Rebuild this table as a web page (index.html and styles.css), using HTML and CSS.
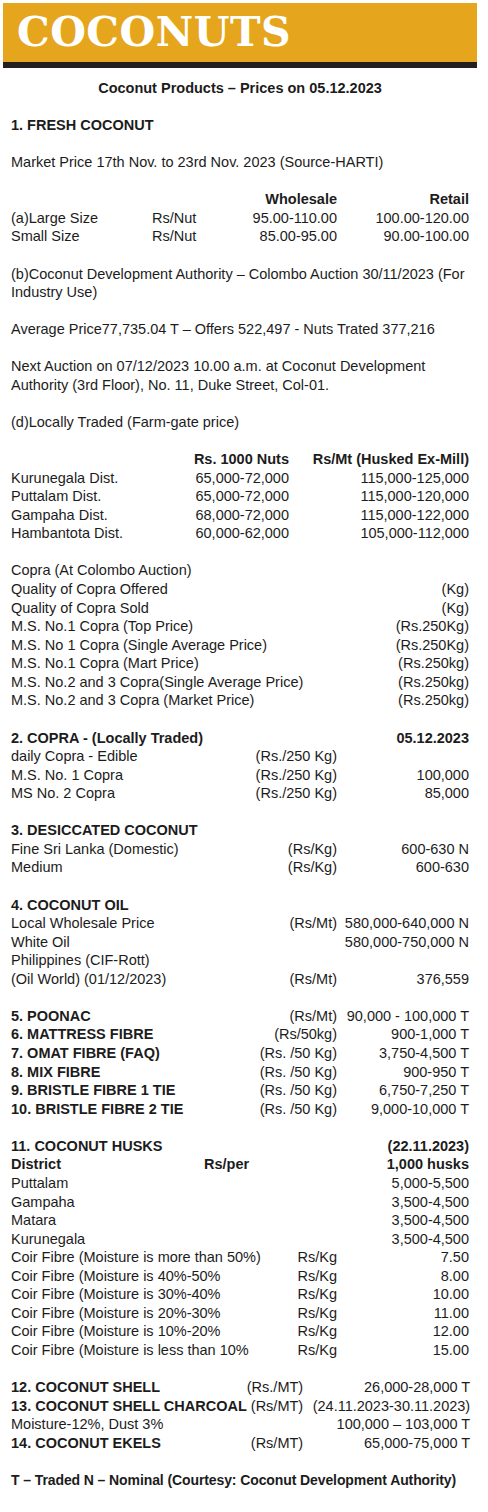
FILE: index.html
```html
<!DOCTYPE html>
<html lang="en">
<head>
<meta charset="utf-8">
<title>Coconuts</title>
<link rel="stylesheet" href="styles.css">
</head>
<body>
<div class="page">
  <header class="banner">
    <h1 class="banner-title">COCONUTS</h1>
  </header>

  <main class="content">
    <p class="title">Coconut Products – Prices on 05.12.2023</p>

    <p class="block bold">1. FRESH COCONUT</p>

    <p class="block">Market Price 17th Nov. to 23rd Nov. 2023 (Source-HARTI)</p>

    <div class="block t-fresh">
      <span></span><span></span><span class="r bold">Wholesale</span><span class="r bold">Retail</span>
      <span>(a)Large Size</span><span>Rs/Nut</span><span class="r">95.00-110.00</span><span class="r">100.00-120.00</span>
      <span>Small Size</span><span>Rs/Nut</span><span class="r">85.00-95.00</span><span class="r">90.00-100.00</span>
    </div>

    <p class="block wide">(b)Coconut Development Authority – Colombo Auction 30/11/2023 (For Industry Use)</p>

    <p class="block">Average Price77,735.04 T – Offers 522,497 - Nuts Trated 377,216</p>

    <p class="block">Next Auction on 07/12/2023 10.00 a.m. at Coconut Development Authority (3rd Floor), No. 11, Duke Street, Col-01.</p>

    <p class="block">(d)Locally Traded (Farm-gate price)</p>

    <div class="block t-district">
      <span></span><span class="r bold">Rs. 1000 Nuts</span><span class="r bold">Rs/Mt (Husked Ex-Mill)</span>
      <span>Kurunegala Dist.</span><span class="r">65,000-72,000</span><span class="r">115,000-125,000</span>
      <span>Puttalam Dist.</span><span class="r">65,000-72,000</span><span class="r">115,000-120,000</span>
      <span>Gampaha Dist.</span><span class="r">68,000-72,000</span><span class="r">115,000-122,000</span>
      <span>Hambantota Dist.</span><span class="r">60,000-62,000</span><span class="r">105,000-112,000</span>
    </div>

    <div class="block t-two">
      <span>Copra (At Colombo Auction)</span><span></span>
      <span>Quality of Copra Offered</span><span class="r">(Kg)</span>
      <span>Quality of Copra Sold</span><span class="r">(Kg)</span>
      <span>M.S. No.1 Copra (Top Price)</span><span class="r">(Rs.250Kg)</span>
      <span>M.S. No 1 Copra (Single Average Price)</span><span class="r">(Rs.250Kg)</span>
      <span>M.S. No.1 Copra (Mart Price)</span><span class="r">(Rs.250kg)</span>
      <span>M.S. No.2 and 3 Copra(Single Average Price)</span><span class="r">(Rs.250kg)</span>
      <span>M.S. No.2 and 3 Copra (Market Price)</span><span class="r">(Rs.250kg)</span>
    </div>

    <div class="block t-three">
      <span class="bold">2. COPRA - (Locally Traded)</span><span></span><span class="r bold">05.12.2023</span>
      <span>daily Copra - Edible</span><span class="r">(Rs./250 Kg)</span><span></span>
      <span>M.S. No. 1 Copra</span><span class="r">(Rs./250 Kg)</span><span class="r">100,000</span>
      <span>MS No. 2 Copra</span><span class="r">(Rs./250 Kg)</span><span class="r">85,000</span>
    </div>

    <div class="block t-three">
      <span class="bold span3">3. DESICCATED COCONUT</span>
      <span>Fine Sri Lanka (Domestic)</span><span class="r">(Rs/Kg)</span><span class="r">600-630 N</span>
      <span>Medium</span><span class="r">(Rs/Kg)</span><span class="r">600-630</span>
    </div>

    <div class="block t-three">
      <span class="bold span3">4. COCONUT OIL</span>
      <span>Local Wholesale Price</span><span class="r">(Rs/Mt)</span><span class="r">580,000-640,000 N</span>
      <span>White Oil</span><span></span><span class="r">580,000-750,000 N</span>
      <span class="span3">Philippines (CIF-Rott)</span>
      <span>(Oil World) (01/12/2023)</span><span class="r">(Rs/Mt)</span><span class="r">376,559</span>
    </div>

    <div class="block t-three">
      <span class="bold">5. POONAC</span><span class="r">(Rs/Mt)</span><span class="r">90,000 - 100,000 T</span>
      <span class="bold">6. MATTRESS FIBRE</span><span class="r">(Rs/50kg)</span><span class="r">900-1,000 T</span>
      <span class="bold">7. OMAT FIBRE (FAQ)</span><span class="r">(Rs. /50 Kg)</span><span class="r">3,750-4,500 T</span>
      <span class="bold">8. MIX FIBRE</span><span class="r">(Rs. /50 Kg)</span><span class="r">900-950 T</span>
      <span class="bold">9. BRISTLE FIBRE 1 TIE</span><span class="r">(Rs. /50 Kg)</span><span class="r">6,750-7,250 T</span>
      <span class="bold">10. BRISTLE FIBRE 2 TIE</span><span class="r">(Rs. /50 Kg)</span><span class="r">9,000-10,000 T</span>
    </div>

    <div class="block">
      <div class="t-husk-head">
        <span class="bold">11. COCONUT HUSKS</span><span></span><span class="r bold">(22.11.2023)</span>
        <span class="bold">District</span><span class="bold">Rs/per</span><span class="r bold">1,000 husks</span>
        <span>Puttalam</span><span></span><span class="r">5,000-5,500</span>
        <span>Gampaha</span><span></span><span class="r">3,500-4,500</span>
        <span>Matara</span><span></span><span class="r">3,500-4,500</span>
        <span>Kurunegala</span><span></span><span class="r">3,500-4,500</span>
      </div>
      <div class="t-three">
        <span>Coir Fibre (Moisture is more than 50%)</span><span>Rs/Kg</span><span class="r">7.50</span>
        <span>Coir Fibre (Moisture is 40%-50%</span><span>Rs/Kg</span><span class="r">8.00</span>
        <span>Coir Fibre (Moisture is 30%-40%</span><span>Rs/Kg</span><span class="r">10.00</span>
        <span>Coir Fibre (Moisture is 20%-30%</span><span>Rs/Kg</span><span class="r">11.00</span>
        <span>Coir Fibre (Moisture is 10%-20%</span><span>Rs/Kg</span><span class="r">12.00</span>
        <span>Coir Fibre (Moisture is less than 10%</span><span>Rs/Kg</span><span class="r">15.00</span>
      </div>
    </div>

    <div class="block t-shell">
      <span class="bold">12. COCONUT SHELL</span><span class="r">(Rs./MT)</span><span class="r">26,000-28,000 T</span>
      <span class="bold">13. COCONUT SHELL CHARCOAL</span><span class="r">(Rs/MT)</span><span class="r">(24.11.2023-30.11.2023)</span>
      <span>Moisture-12%, Dust 3%</span><span></span><span class="r">100,000 – 103,000 T</span>
      <span class="bold">14. COCONUT EKELS</span><span class="r">(Rs/MT)</span><span class="r">65,000-75,000 T</span>
    </div>

    <p class="block bold footer">T – Traded N – Nominal (Courtesy: Coconut Development Authority)</p>
  </main>
</div>
</body>
</html>
```

FILE: styles.css
```css
* {
  box-sizing: border-box;
}

html, body {
  margin: 0;
  padding: 0;
  background: #ffffff;
}

body {
  font-family: "Liberation Sans", Arial, Helvetica, sans-serif;
  font-size: 14.5px;
  line-height: 18.56px;
  color: #1c1c1c;
}

.page {
  width: 488px;
  padding: 3px 11px 0 3px;
}

.banner {
  background: #e5a61d;
  border-bottom: 6px solid #231f20;
  height: 65px;
  padding: 9px 0 0 14px;
}

.banner-title {
  margin: 0;
  font-family: "DejaVu Serif", "Liberation Serif", serif;
  font-weight: bold;
  font-size: 41px;
  line-height: 40px;
  color: #ffffff;
  letter-spacing: 0.5px;
}

.content {
  padding: 11px 8px 0 8px;
}

p {
  margin: 0;
}

.title {
  font-weight: bold;
  text-align: center;
  margin-bottom: 18.56px;
}

.block {
  margin: 0 0 18.56px 0;
}

.wide {
  margin-right: -9px;
}

.footer {
  font-size: 14px;
  white-space: nowrap;
  letter-spacing: -0.1px;
}

.bold {
  font-weight: bold;
}

.r {
  text-align: right;
  white-space: nowrap;
}

.span3 {
  grid-column: 1 / -1;
}

.t-fresh {
  display: grid;
  grid-template-columns: 141px 80px 105px 1fr;
}

.t-district {
  display: grid;
  grid-template-columns: 170px 108px 1fr;
}

.t-two {
  display: grid;
  grid-template-columns: 1fr auto;
}

.t-three {
  display: grid;
  grid-template-columns: 1fr auto 132px;
}

.t-husk-head {
  display: grid;
  grid-template-columns: 193px 1fr auto;
}

.t-shell {
  display: grid;
  grid-template-columns: 1fr auto 167px;
}

.t-shell > span {
  white-space: nowrap;
}
```
